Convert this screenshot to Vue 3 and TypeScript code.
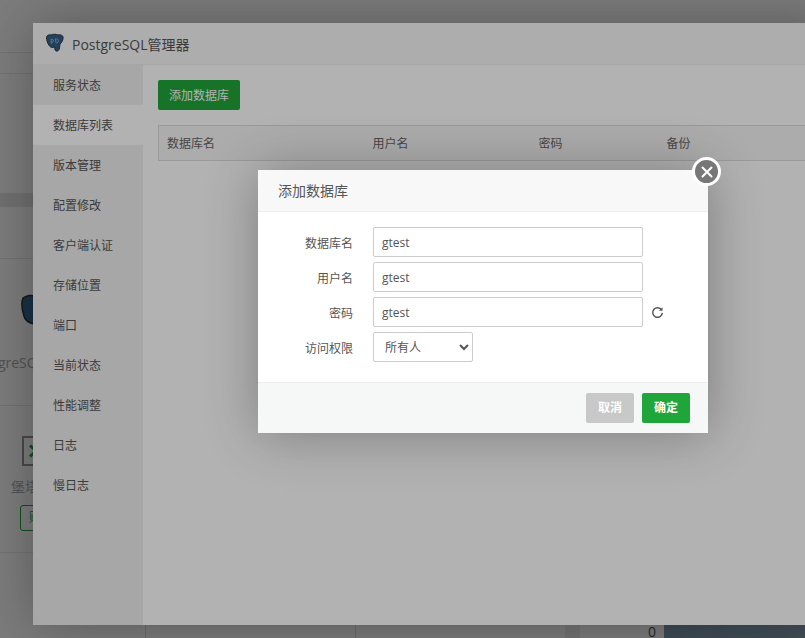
<script setup lang="ts">
import { ref } from 'vue'

const menu = ['服务状态', '数据库列表', '版本管理', '配置修改', '客户端认证', '存储位置', '端口', '当前状态', '性能调整', '日志', '慢日志']
const activeMenu = ref('数据库列表')
const columns = ['数据库名', '用户名', '密码', '备份']

const form = ref({
  name: 'gtest',
  user: 'gtest',
  password: 'gtest',
  access: '所有人',
})
</script>

<template>
  <div class="page">
    <!-- 背后的页面 -->
    <div class="bg">
      <div class="bg-top" />
      <div class="bg-row bg-row--thin" />
      <div class="bg-row bg-row--first" />
      <div class="bg-band" />
      <div class="bg-row bg-row--head" />
      <div class="bg-item">
        <svg class="bg-elephant" viewBox="0 0 24 52" width="24" height="52">
          <path d="M13 12 C17 9 22 9 24 10 V38 C20 37 15 35 14 30 C12 24 11 17 13 12 Z" fill="#336791" stroke="#333" stroke-width="1.5" />
        </svg>
        <span class="bg-item__name">PostgreSQL</span>
      </div>
      <div class="bg-item bg-item--fort">
        <div class="bg-fort">
          <svg viewBox="0 0 12 14" width="12" height="14">
            <path d="M2 1.5 L8 7 L2 12.5" fill="none" stroke="#20a53a" stroke-width="3" />
          </svg>
        </div>
        <span class="bg-fort__name">堡塔</span>
        <div class="bg-fort__btn">购买</div>
      </div>
      <div class="bg-bottom">
        <div class="bg-cell" />
        <div class="bg-cell" />
        <div class="bg-cell" />
        <div class="bg-cell bg-cell--gap" />
        <div class="bg-cell bg-cell--num">0</div>
        <div class="bg-picture" />
      </div>
    </div>
    <div class="shade" />

    <!-- PostgreSQL管理器 -->
    <section class="layer">
      <header class="layer__title">
        <svg class="logo" viewBox="0 0 20 20" width="20" height="20">
          <path d="M1.5 4.5 C1.5 2.5 3.5 1.5 6 2 C7.5 1 11.5 1 13 2 C15.5 1.3 18.5 2.5 18.1 5 C17.9 7.5 16.5 10 15 11 L14.5 15 C14.3 17.5 12.5 18.5 11 18 C9.8 17.5 9.8 15.5 9.7 14 C7.5 14.8 5.5 14.5 4.5 13 C2.5 10.5 1.5 7 1.5 4.5 Z" fill="#2f5f88" stroke="#2b3a45" stroke-width="1" />
          <path d="M6 6 L6.3 11 M6 6.5 C7.5 5.5 8.5 6.5 8.3 8 C8.1 9.4 7 9.6 6.3 9 M10.5 5.5 L10.8 9.5 C12 10.5 13.5 9.5 13.2 7.5 C13 6 11.5 5.5 10.5 6.5" fill="none" stroke="#a9bfd0" stroke-width="0.7" />
        </svg>
        PostgreSQL管理器
      </header>
      <div class="layer__body">
        <ul class="side">
          <li
            v-for="item in menu"
            :key="item"
            class="side__item"
            :class="{ 'side__item--active': item === activeMenu }"
            @click="activeMenu = item"
          >
            {{ item }}
          </li>
        </ul>
        <div class="main">
          <button class="btn btn--green" type="button">添加数据库</button>
          <table class="table">
            <thead>
              <tr>
                <th v-for="col in columns" :key="col">{{ col }}</th>
              </tr>
            </thead>
          </table>
        </div>
      </div>
    </section>
    <div class="shade" />

    <!-- 添加数据库 -->
    <section class="dialog">
      <button class="dialog__close" type="button" aria-label="关闭">
        <svg viewBox="0 0 12 12" width="12" height="12">
          <path d="M1.5 1.5 L10.5 10.5 M10.5 1.5 L1.5 10.5" stroke="#fff" stroke-width="2" stroke-linecap="round" />
        </svg>
      </button>
      <header class="dialog__title">添加数据库</header>
      <div class="dialog__form">
        <label class="field">
          <span class="field__label">数据库名</span>
          <input v-model="form.name" class="field__input" type="text">
        </label>
        <label class="field">
          <span class="field__label">用户名</span>
          <input v-model="form.user" class="field__input" type="text">
        </label>
        <label class="field">
          <span class="field__label">密码</span>
          <input v-model="form.password" class="field__input" type="text">
          <svg class="field__refresh" viewBox="0 0 14 14" width="13" height="13">
            <path d="M11.4 4.2 A5.2 5.2 0 1 0 12.2 7.4" fill="none" stroke="#555" stroke-width="1.6" />
            <path d="M12.4 1.4 V5.2 H8.6 Z" fill="#555" />
          </svg>
        </label>
        <label class="field">
          <span class="field__label">访问权限</span>
          <select v-model="form.access" class="field__select">
            <option>所有人</option>
            <option>本地服务器</option>
            <option>指定IP</option>
          </select>
        </label>
      </div>
      <footer class="dialog__footer">
        <button class="btn btn--gray" type="button">取消</button>
        <button class="btn btn--ok" type="button">确定</button>
      </footer>
    </section>
  </div>
</template>

<style scoped>
.page {
  position: relative;
  width: 805px;
  height: 638px;
  overflow: hidden;
  font-family: "Open Sans", "Noto Sans CJK SC", sans-serif;
  font-size: 12px;
  color: #666;
}

.bg {
  display: flex;
  flex-direction: column;
  height: 100%;
  background: #fff;
}

.bg-top {
  height: 52px;
  background: #fff;
  border-bottom: 1px solid #e8e8e8;
}

.bg-row--thin {
  height: 20px;
  border-bottom: 1px solid #e8e8e8;
}

.bg-row--first {
  height: 119px;
}

.bg-band {
  height: 14px;
  background: #e6e6e6;
}

.bg-row--head {
  height: 51px;
  border-bottom: 1px solid #e8e8e8;
}

.bg-item {
  position: relative;
  height: 146px;
  border-bottom: 1px solid #e8e8e8;
}

.bg-elephant {
  position: absolute;
  left: 10px;
  top: 27px;
}

.bg-item__name {
  position: absolute;
  right: calc(100% - 45px);
  top: 94px;
  font-size: 14px;
  color: #aaa;
  white-space: nowrap;
}

.bg-fort {
  position: absolute;
  left: 22px;
  top: 30px;
  display: flex;
  align-items: center;
  width: 28px;
  height: 26px;
  padding-left: 4px;
  border: 2px solid #999;
}

.bg-fort__name {
  position: absolute;
  left: 11px;
  top: 70px;
  font-size: 14px;
  color: #aaa;
}

.bg-fort__btn {
  position: absolute;
  left: 20px;
  top: 99px;
  width: 50px;
  height: 24px;
  border: 1px solid #20a53a;
  border-radius: 3px;
  padding-left: 8px;
  line-height: 24px;
  color: #20a53a;
}

.bg-bottom {
  flex: 1;
  display: flex;
  align-items: flex-end;
  height: 86px;
}

.bg-cell {
  width: 209px;
  height: 100%;
  border-left: 1px solid #e0e0e0;
}

.bg-cell:first-child {
  width: 145px;
  border-left: 0;
}

.bg-cell--gap {
  width: 15px;
  background: #efefef;
  border-left: 0;
}

.bg-cell--num {
  width: 84px;
  padding-right: 8px;
  box-sizing: border-box;
  border-left: 0;
  display: flex;
  align-items: flex-end;
  justify-content: flex-end;
  font-size: 14px;
  line-height: 13px;
  overflow: hidden;
  color: #555;
}

.bg-picture {
  flex: 1;
  height: 100%;
  background: linear-gradient(100deg, #7e99b3, #8ea4b8);
}

.shade {
  position: absolute;
  inset: 0;
  background: rgba(0, 0, 0, 0.3);
}

.layer {
  position: absolute;
  left: 33px;
  top: 23px;
  width: 800px;
  height: 602px;
  display: flex;
  flex-direction: column;
  background: #fff;
  box-shadow: 1px 1px 50px rgba(0, 0, 0, 0.3);
}

.layer__title {
  display: flex;
  align-items: center;
  gap: 7px;
  flex-shrink: 0;
  height: 42px;
  box-sizing: border-box;
  padding-left: 12px;
  background: #f8f8f8;
  border-bottom: 1px solid #eee;
  font-size: 14px;
  color: #555;
}

.logo {
  margin-top: -2px;
}

.layer__body {
  flex: 1;
  display: flex;
}

.side {
  width: 110px;
  margin: 0;
  padding: 0;
  list-style: none;
  background: #f0f0f0;
}

.side__item {
  height: 40px;
  padding-left: 20px;
  line-height: 42px;
  color: #555;
  cursor: pointer;
}

.side__item--active {
  background: #fff;
  color: #555;
}

.main {
  flex: 1;
  padding: 15px;
}

.btn {
  height: 30px;
  padding: 0 9px 0 9px;
  border: 1px solid transparent;
  border-radius: 2px;
  font: inherit;
  cursor: pointer;
}

.btn--green {
  display: block;
  width: 82px;
  background: #20a53a;
  color: #fff;
}

.table {
  width: 660px;
  margin-top: 15px;
  border-collapse: collapse;
  table-layout: fixed;
}

.table th {
  height: 35px;
  padding: 0 8px;
  box-sizing: border-box;
  background: #f6f6f6;
  border: 1px solid #ddd;
  border-width: 1px 0;
  font-weight: 400;
  text-align: left;
  color: #666;
}

.table tr > th:first-child {
  width: 206px;
  border-left: 1px solid #ddd;
}

.table tr > th:nth-child(2) {
  width: 166px;
}

.table tr > th:nth-child(3) {
  width: 128px;
}

.dialog {
  position: absolute;
  left: 258px;
  top: 170px;
  width: 450px;
  height: 263px;
  display: flex;
  flex-direction: column;
  background: #fff;
  box-shadow: 1px 1px 50px rgba(0, 0, 0, 0.3);
}

.dialog__close {
  position: absolute;
  top: -13px;
  right: -13px;
  display: flex;
  align-items: center;
  justify-content: center;
  width: 29px;
  height: 29px;
  padding: 0;
  border: 3px solid #fff;
  border-radius: 50%;
  background: #777;
  cursor: pointer;
}

.dialog__title {
  flex-shrink: 0;
  height: 42px;
  box-sizing: border-box;
  padding-left: 20px;
  background: #f8f8f8;
  border-bottom: 1px solid #eee;
  font-size: 14px;
  line-height: 41px;
  color: #555;
}

.dialog__form {
  flex: 1;
  display: flex;
  flex-direction: column;
  gap: 5px;
  padding-top: 15px;
}

.field {
  display: flex;
  align-items: center;
  height: 30px;
}

.field__label {
  width: 95px;
  margin-right: 20px;
  padding-top: 2px;
  text-align: right;
  color: #555;
}

.field__input {
  width: 270px;
  height: 30px;
  box-sizing: border-box;
  padding: 0 8px;
  border: 1px solid #ccc;
  border-radius: 2px;
  outline: none;
  font: inherit;
  color: #555;
}

.field__refresh {
  margin-left: 8px;
}

.field__select {
  width: 100px;
  height: 30px;
  box-sizing: border-box;
  padding: 0 7px;
  border: 1px solid #ccc;
  border-radius: 2px;
  outline: none;
  background: #fff;
  font: inherit;
  color: #555;
}

.dialog__footer {
  display: flex;
  justify-content: flex-end;
  gap: 8px;
  flex-shrink: 0;
  height: 51px;
  box-sizing: border-box;
  padding: 10px 18px 0 0;
  background: #f6f8f8;
  border-top: 1px solid #eee;
}

.btn--gray,
.btn--ok {
  width: 48px;
  padding: 0 0 2px;
  font-weight: 700;
  color: #fff;
}

.btn--gray {
  background: #c8c8c8;
}

.btn--ok {
  background: #20a53a;
}
</style>
